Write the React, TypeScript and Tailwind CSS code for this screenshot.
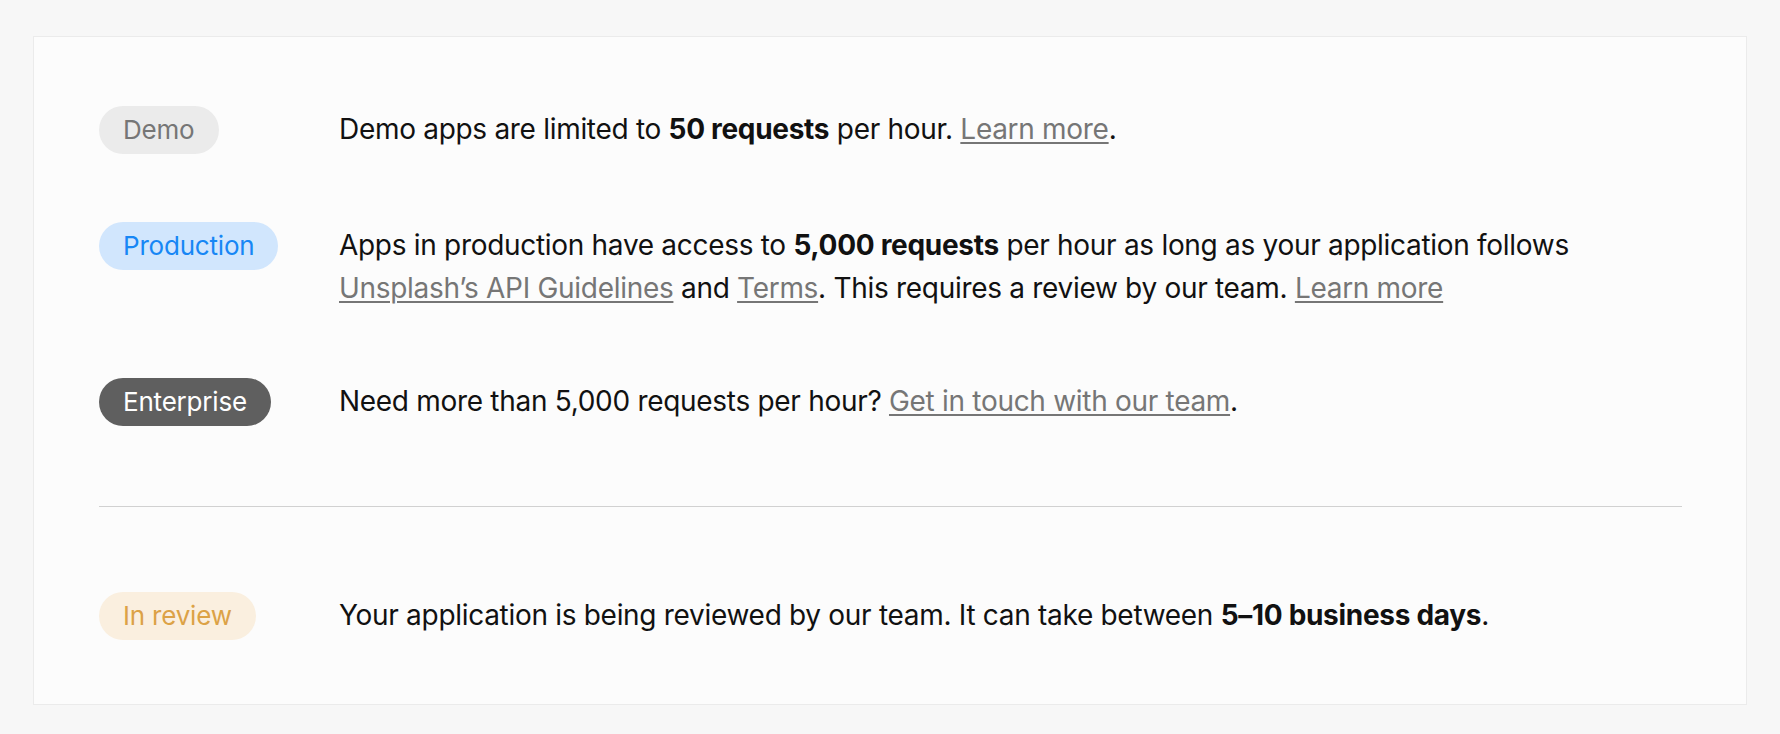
import React from "react";

const font = { fontFamily: "Inter, 'Noto Sans', sans-serif" };

type BadgeProps = { label: string; className: string };

const Badge = ({ label, className }: BadgeProps) => (
  <span
    className={`inline-flex h-[48px] items-center rounded-full px-6 text-[26px] leading-none tracking-[-0.2px] ${className}`}
  >
    {label}
  </span>
);

const Link = ({ children }: { children: React.ReactNode }) => (
  <a
    href="#"
    className="text-[#767676] underline decoration-[1.5px] underline-offset-[3px]"
  >
    {children}
  </a>
);

const Row = ({ badge, children }: { badge: React.ReactNode; children: React.ReactNode }) => (
  <div className="grid grid-cols-[240px_1fr] items-start">
    <div>{badge}</div>
    <p className="mt-[2px] text-[28px] leading-[43px] tracking-[-0.3px] text-[#111111]">
      {children}
    </p>
  </div>
);

export default function App() {
  return (
    <div className="min-h-screen bg-[#f7f7f7] px-[33px] pt-[36px]" style={font}>
      <div className="border border-[#ebebeb] bg-[#fcfcfc] pl-[65px] pr-[64px] pt-[69px] pb-[64px]">
        <div className="flex flex-col gap-[68px]">
          <Row badge={<Badge label="Demo" className="bg-[#ebebeb] text-[#767676]" />}>
            Demo apps are limited to <b className="font-bold">50 requests</b> per hour.{" "}
            <Link>Learn more</Link>.
          </Row>
          <Row badge={<Badge label="Production" className="bg-[#d1e6fd] text-[#1787f5]" />}>
            Apps in production have access to <b className="font-bold">5,000 requests</b> per hour as
            long as your application follows <Link>Unsplash’s API Guidelines</Link> and{" "}
            <Link>Terms</Link>. This requires a review by our team. <Link>Learn more</Link>
          </Row>
          <Row badge={<Badge label="Enterprise" className="bg-[#5f5f5f] text-white" />}>
            Need more than 5,000 requests per hour? <Link>Get in touch with our team</Link>.
          </Row>
        </div>

        <div className="mt-[80px] h-px bg-[#d1d1d1]" />

        <div className="mt-[85px]">
          <Row badge={<Badge label="In review" className="bg-[#faefdf] text-[#dca246]" />}>
            Your application is being reviewed by our team. It can take between{" "}
            <b className="font-bold">5–10 business days</b>.
          </Row>
        </div>
      </div>
    </div>
  );
}
